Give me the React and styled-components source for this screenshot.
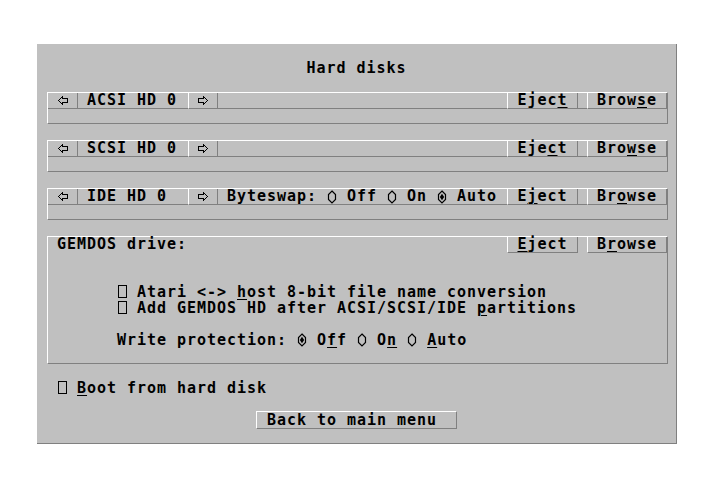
import React from 'react'
import styled, { createGlobalStyle } from 'styled-components'

const LIGHT = '#ffffff'
const DARK = '#808080'
const FACE = '#c0c0c0'

const GlobalStyle = createGlobalStyle`
  html, body {
    margin: 0;
    padding: 0;
    background: #ffffff;
  }
  body {
    font-family: "DejaVu Sans Mono", "Liberation Mono", monospace;
  }
`

const Screen = styled.div`
  width: 713px;
  height: 484px;
  box-sizing: border-box;
  padding: 44px 0 0 37px;
`

const Dialog = styled.div`
  width: 640px;
  height: 400px;
  box-sizing: border-box;
  background: ${FACE};
  border-right: 1px solid ${DARK};
  border-bottom: 1px solid ${DARK};
  padding-top: 16px;
  display: flex;
  flex-direction: column;
  color: #000;
  font-size: 15px;
  font-weight: bold;
  letter-spacing: 0.97px;
  line-height: 16px;
  white-space: pre;
`

const Title = styled.div`
  height: 16px;
  text-align: center;
`

const Frame = styled.div`
  margin: 16px 0 0 10px;
  width: 621px;
  height: ${p => p.$rows * 16}px;
  box-sizing: border-box;
  border: 1px solid;
  border-color: ${LIGHT} ${DARK} ${DARK} ${LIGHT};
  display: flex;
  flex-direction: column;
`

const TopRow = styled.div`
  display: flex;
  height: 16px;
  box-sizing: border-box;
  line-height: 15px;
  border-bottom: ${p => (p.$divided ? `1px solid ${DARK}` : 'none')};
`

const Cell = styled.div`
  width: ${p => (p.$w ? `${p.$w}px` : 'auto')};
  flex: ${p => (p.$grow ? 1 : 'none')};
  padding-left: ${p => p.$pad || 0}px;
  box-sizing: border-box;
`

const Button = styled.div`
  width: ${p => p.$w}px;
  height: 16px;
  box-sizing: border-box;
  display: flex;
  align-items: center;
  justify-content: center;
  border-left: ${p => (p.$first ? 'none' : `1px solid ${LIGHT}`)};
  border-right: 1px solid ${DARK};
  border-bottom: 1px solid ${DARK};
`

const Gap = styled.div`
  width: ${p => p.$w}px;
`

const Body = styled.div`
  padding: 31px 0 0 69px;
`

const Line = styled.div`
  height: 16px;
  margin-top: ${p => p.$skip || 0}px;
  padding-left: ${p => p.$indent || 0}px;
`

const U = styled.span`
  text-decoration: underline;
  text-decoration-thickness: 1px;
  text-underline-offset: 2px;
`

const BackButton = styled.div`
  margin: 15px auto 0;
  width: 201px;
  height: 18px;
  box-sizing: border-box;
  border: 1px solid;
  border-color: ${LIGHT} ${DARK} ${DARK} ${LIGHT};
  padding-left: 10px;
  line-height: 16px;
`

const Glyph = styled.svg`
  display: inline-block;
  vertical-align: top;
`

const Arrow = ({ right }) => (
  <svg
    width="10"
    height="9"
    viewBox="0 0 10 9"
    shapeRendering="crispEdges"
    style={{ transform: right ? 'scaleX(-1)' : 'none' }}
  >
    <path d="M0.5,4.5 L4.5,0.5 L4.5,2.5 L9.5,2.5 L9.5,6.5 L4.5,6.5 L4.5,8.5 Z" fill="none" stroke="#000" strokeWidth="1.2" />
  </svg>
)

const CheckBox = () => (
  <Glyph width="10" height="16" viewBox="0 0 10 16">
    <rect x="1.5" y="1.5" width="8" height="12" fill="none" stroke="#000" strokeWidth="1" />
  </Glyph>
)

const Radio = ({ on }) => (
  <Glyph width="10" height="16" viewBox="0 0 10 16">
    <path d="M5,2 L8.5,5.5 L8.5,10.5 L5,14 L1.5,10.5 L1.5,5.5 Z" fill="none" stroke="#000" strokeWidth="1.2" />
    {on && <path d="M5,4.8 L7.2,8 L5,11.2 L2.8,8 Z" fill="#000" />}
  </Glyph>
)

const HardDisk = ({ name, eject, browse, children }) => (
  <Frame $rows={2}>
    <TopRow $divided>
      <Button $w={30} $first><Arrow /></Button>
      <Cell $w={110} $pad={9}>{name}</Cell>
      <Button $w={30}><Arrow right /></Button>
      <Cell $grow $pad={9}>{children}</Cell>
      <Button $w={71}>{eject}</Button>
      <Gap $w={9} />
      <Button $w={80}>{browse}</Button>
    </TopRow>
  </Frame>
)

export default function App() {
  return (
    <Screen>
      <GlobalStyle />
      <Dialog>
        <Title>Hard disks</Title>

        <HardDisk
          name="ACSI HD 0"
          eject={<span>Ejec<U>t</U></span>}
          browse={<span>Brow<U>s</U>e</span>}
        />
        <HardDisk
          name="SCSI HD 0"
          eject={<span>Eje<U>c</U>t</span>}
          browse={<span>Bro<U>w</U>se</span>}
        />
        <HardDisk
          name="IDE HD 0"
          eject={<span>E<U>j</U>ect</span>}
          browse={<span>Br<U>o</U>wse</span>}
        >
          Byteswap: <Radio /> Off <Radio /> On <Radio on /> Auto
        </HardDisk>

        <Frame $rows={8}>
          <TopRow>
            <Cell $grow $pad={9}>GEMDOS drive:</Cell>
            <Button $w={71}><span><U>E</U>ject</span></Button>
            <Gap $w={9} />
            <Button $w={80}><span>B<U>r</U>owse</span></Button>
          </TopRow>
          <Body>
            <Line><CheckBox /> Atari &lt;-&gt; <U>h</U>ost 8-bit file name conversion</Line>
            <Line><CheckBox /> Add GEMDOS HD after ACSI/SCSI/IDE <U>p</U>artitions</Line>
            <Line $skip={16}>
              Write protection: <Radio on /> O<U>f</U>f <Radio /> O<U>n</U> <Radio /> <U>A</U>uto
            </Line>
          </Body>
        </Frame>

        <Line $skip={16} $indent={20}>
          <CheckBox /> <U>B</U>oot from hard disk
        </Line>

        <BackButton>Back to main menu</BackButton>
      </Dialog>
    </Screen>
  )
}
